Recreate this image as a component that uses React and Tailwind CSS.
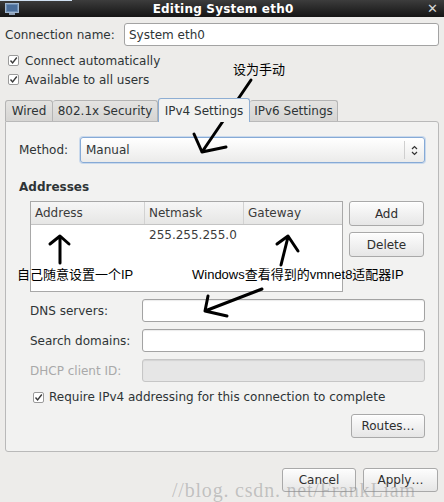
import React from "react";

const ui = { fontFamily: '"DejaVu Sans", sans-serif' };
const cjk = { fontFamily: '"Liberation Sans", "Noto Sans CJK SC", sans-serif' };

function Check({ className = "" }) {
  return (
    <span className={`inline-flex items-center justify-center w-[11px] h-[11px] border border-[#9a9a9a] bg-white rounded-[2px] ${className}`}>
      <svg width="9" height="9" viewBox="0 0 9 9">
        <path d="M1.5 4.5 L3.6 7 L7.8 1.5" fill="none" stroke="#3a3a3a" strokeWidth="1.4" />
      </svg>
    </span>
  );
}

function Btn({ children, className = "" }) {
  return (
    <button className={`flex items-center justify-center border border-[#a9a9a9] rounded-[3px] bg-gradient-to-b from-[#fdfdfd] to-[#e6e6e6] text-[#2e2e2e] shadow-[inset_0_1px_0_#ffffff] ${className}`}>
      {children}
    </button>
  );
}

function Field({ disabled = false, className = "" }) {
  return (
    <div className={`h-[23px] border rounded-[3px] shadow-[inset_0_1px_1px_rgba(0,0,0,0.08)] ${disabled ? "bg-[#e6e6e6] border-[#c6c6c6]" : "bg-white border-[#a3a3a3]"} ${className}`} />
  );
}

export default function App() {
  return (
    <div className="relative w-[444px] h-[502px] bg-[#edecea] overflow-hidden text-[11px] text-[#2e3436]" style={ui}>
      {/* title bar */}
      <div className="relative h-[17px] bg-gradient-to-b from-[#3d3d3d] to-[#151515] flex items-center">
        <div className="absolute left-0 top-0 w-[72px] h-[1px] bg-[#cfe0f2]" />
        <svg className="ml-[5px]" width="14" height="13" viewBox="0 0 14 13">
          <rect x="0.5" y="1.5" width="13" height="9" fill="#6d8db3" stroke="#9fb6d0" />
          <rect x="2" y="3" width="10" height="6" fill="#4a6d99" />
          <rect x="4" y="11" width="6" height="2" fill="#8d9fb5" />
        </svg>
        <div className="flex-1 text-center text-white font-bold text-[12px] tracking-[0.2px]">Editing System eth0</div>
        <span className="mr-[6px] text-[#d8d8d8] text-[13px] font-bold leading-none">✕</span>
      </div>

      <div className="px-[5px]">
        {/* connection name */}
        <div className="flex items-center mt-[6px] h-[23px]">
          <span className="w-[119px] text-[12px]">Connection name:</span>
          <div className="flex-1 h-[23px] bg-white border border-[#a3a3a3] rounded-[3px] flex items-center pl-[4px] text-[12px]">System eth0</div>
        </div>

        <div className="flex items-center mt-[5px] h-[19px] pl-[3px]">
          <Check />
          <span className="ml-[6px] text-[12px]">Connect automatically</span>
        </div>
        <div className="flex items-center h-[19px] pl-[3px]">
          <Check />
          <span className="ml-[6px] text-[12px]">Available to all users</span>
        </div>

        {/* tabs */}
        <div className="flex items-end h-[24px] mt-[8px] text-[12px]">
          <div className="h-[21px] w-[48px] flex items-center justify-center bg-gradient-to-b from-[#e4e3e1] to-[#d6d5d3] border border-b-0 border-[#b4b4b4] rounded-t-[3px]">Wired</div>
          <div className="h-[21px] w-[105px] flex items-center justify-center bg-gradient-to-b from-[#e4e3e1] to-[#d6d5d3] border border-b-0 border-l-0 border-[#b4b4b4] rounded-t-[3px]">802.1x Security</div>
          <div className="relative z-10 h-[24px] w-[92px] flex items-center justify-center bg-[#f2f2f1] border border-b-0 border-[#8eaed3] rounded-t-[3px] mb-[-1px]">IPv4 Settings</div>
          <div className="h-[21px] w-[88px] flex items-center justify-center bg-gradient-to-b from-[#e4e3e1] to-[#d6d5d3] border border-b-0 border-l-0 border-[#b4b4b4] rounded-t-[3px]">IPv6 Settings</div>
        </div>

        {/* panel */}
        <div className="h-[331px] bg-[#f2f2f1] border border-[#b9b9b9] rounded-b-[3px] rounded-tr-[3px] px-[13px] pt-[15px]">
          <div className="flex items-center h-[26px]">
            <span className="w-[61px] text-[12px]">Method:</span>
            <div className="flex-1 h-[26px] flex items-center border border-[#86aad6] rounded-[3px] bg-gradient-to-b from-[#ffffff] to-[#ebebea] shadow-[0_0_0_1px_#c9d9ec]">
              <span className="flex-1 pl-[5px] text-[12px]">Manual</span>
              <div className="w-[1px] h-[18px] bg-[#cfcfcf]" />
              <svg className="mx-[6px]" width="7" height="11" viewBox="0 0 7 11">
                <path d="M1 4 L3.5 1.5 L6 4 M1 7 L3.5 9.5 L6 7" fill="none" stroke="#333" strokeWidth="1.2" />
              </svg>
            </div>
          </div>

          <div className="mt-[16px] font-bold text-[12px] h-[16px] leading-[16px]">Addresses</div>

          <div className="flex mt-[6px] pl-[11px]">
            <div className="w-[313px] h-[91px] bg-white border border-[#a8a8a8]">
              <div className="flex h-[23px] bg-gradient-to-b from-[#f6f6f6] to-[#e6e6e5] border-b border-[#c4c4c4] text-[12px] text-[#3b3b3b]">
                <div className="w-[114px] flex items-center pl-[4px] border-r border-[#d2d2d2]">Address</div>
                <div className="w-[99px] flex items-center pl-[4px] border-r border-[#d2d2d2]">Netmask</div>
                <div className="flex-1 flex items-center pl-[4px]">Gateway</div>
              </div>
              <div className="flex h-[20px] text-[12px] text-[#3b3b3b]">
                <div className="w-[114px]" />
                <div className="w-[99px] flex items-center pl-[4px]">255.255.255.0</div>
                <div className="flex-1" />
              </div>
            </div>
            <div className="ml-[6px] flex flex-col">
              <Btn className="w-[75px] h-[25px] text-[12px]">Add</Btn>
              <Btn className="w-[75px] h-[25px] text-[12px] mt-[6px]">Delete</Btn>
            </div>
          </div>

          <div className="pl-[11px] mt-[7px] flex flex-col gap-[7px] text-[12px]">
            <div className="flex items-center">
              <span className="w-[112px]">DNS servers:</span>
              <Field className="flex-1" />
            </div>
            <div className="flex items-center">
              <span className="w-[112px]">Search domains:</span>
              <Field className="flex-1" />
            </div>
            <div className="flex items-center">
              <span className="w-[112px] text-[#a9a9a9]">DHCP client ID:</span>
              <Field disabled className="flex-1" />
            </div>
          </div>

          <div className="flex items-center mt-[8px] pl-[14px] h-[14px]">
            <Check />
            <span className="ml-[5px] text-[12px]">Require IPv4 addressing for this connection to complete</span>
          </div>

          <div className="flex justify-end mt-[10px]">
            <Btn className="w-[74px] h-[24px] text-[12px]">Routes…</Btn>
          </div>
        </div>

        {/* footer */}
        <div className="flex justify-end gap-[7px] mt-[16px] pr-[1px]">
          <Btn className="w-[74px] h-[24px] text-[12px]">Cancel</Btn>
          <Btn className="w-[75px] h-[24px] text-[12px]">Apply…</Btn>
        </div>
      </div>

      {/* watermark */}
      <div className="absolute left-[172px] top-[475px] text-[20px] tracking-[0.8px] whitespace-nowrap text-[#8a8a8a]/45 pointer-events-none" style={{ fontFamily: '"Liberation Serif", serif' }}>
        //blog.&nbsp;csdn.&nbsp;net/FrankLiam
      </div>

      {/* annotations */}
      <div className="absolute left-[233px] top-[60px] text-[13px] text-black" style={cjk}>设为手动</div>
      <div className="absolute left-[17px] top-[265px] text-[13px] text-black" style={cjk}>自己随意设置一个IP</div>
      <div className="absolute left-[192px] top-[265px] text-[13px] text-black" style={cjk}>Windows查看得到的vmnet8适配器IP</div>
      <svg className="absolute left-0 top-0 pointer-events-none" width="444" height="502" viewBox="0 0 444 502">
        <g fill="none" stroke="#000" strokeWidth="3" strokeLinecap="round" strokeLinejoin="round">
          <path d="M251 80 L202 152 M194 134 L202 152 L226 147" />
          <path d="M60 263 L60 237 M50 244 L60 236 L69 244" />
          <path d="M281 265 L288 237 M277 244 L288 236 L298 251" />
          <path d="M262 289 L205 311 M208 296 L205 311 L227 316" />
        </g>
      </svg>
    </div>
  );
}
